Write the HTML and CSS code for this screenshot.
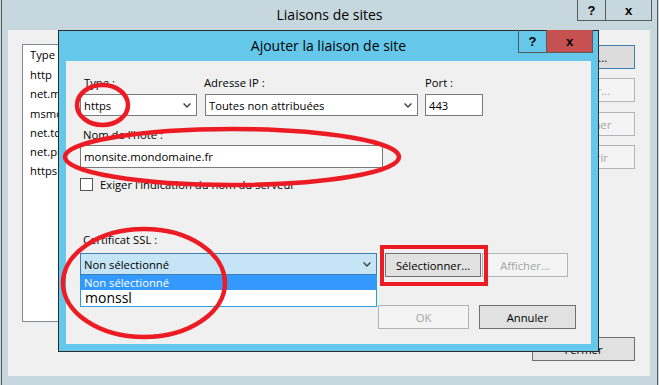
FILE: index.html
```html
<!DOCTYPE html>
<html lang="fr">
<head>
    <meta charset="UTF-8">
    <meta name="viewport" content="width=device-width, initial-scale=1.0">
    <title>Liaisons de sites</title>
    <link rel="stylesheet" href="styles.css">
</head>
<body>

    <!-- Fenêtre principale -->
    <div class="window outer">
        <div class="caption">
            <span class="caption-title">Liaisons de sites</span>
            <div class="caption-buttons outer-buttons">
                <span class="cap-btn help">?</span>
                <span class="cap-btn close">x</span>
            </div>
        </div>
        <div class="client">
            <div class="bindings">
                <div class="list">
                    <div class="list-head">Type</div>
                    <div class="list-row">http</div>
                    <div class="list-row">net.msmq</div>
                    <div class="list-row">msmq.formatname</div>
                    <div class="list-row">net.tcp</div>
                    <div class="list-row">net.pipe</div>
                    <div class="list-row">https</div>
                </div>
                <div class="side-buttons">
                    <button class="btn focused">Ajouter...</button>
                    <button class="btn" disabled>Modifier...</button>
                    <button class="btn" disabled>Supprimer</button>
                    <button class="btn" disabled>Parcourir</button>
                </div>
            </div>
            <div class="footer">
                <button class="btn fermer">Fermer</button>
            </div>
        </div>
    </div>

    <!-- Boîte de dialogue -->
    <div class="window dialog">
        <div class="caption">
            <span class="caption-title">Ajouter la liaison de site</span>
            <div class="caption-buttons dialog-buttons">
                <span class="cap-btn help">?</span>
                <span class="cap-btn close">x</span>
            </div>
        </div>
        <div class="client dialog-client">
            <div class="field-row">
                <div class="field type-field">
                    <label class="label first">Type :</label>
                    <div class="combo">
                        <span>https</span>
                        <svg class="chevron" width="8" height="5" viewBox="0 0 8 5"><polyline points="0.6,0.6 4,4 7.4,0.6"/></svg>
                    </div>
                </div>
                <div class="field ip-field">
                    <label class="label ip-label">Adresse IP :</label>
                    <div class="combo">
                        <span>Toutes non attribuées</span>
                        <svg class="chevron" width="8" height="5" viewBox="0 0 8 5"><polyline points="0.6,0.6 4,4 7.4,0.6"/></svg>
                    </div>
                </div>
                <div class="field port-field">
                    <label class="label">Port :</label>
                    <div class="textbox port-box">443</div>
                </div>
            </div>

            <div class="host-field">
                <label class="label first">Nom de l'hôte :</label>
                <div class="textbox host-box">monsite.mondomaine.fr</div>
            </div>

            <div class="check-row">
                <span class="checkbox"></span>
                <span>Exiger l'indication du nom du serveur</span>
            </div>

            <label class="label first ssl-label">Certificat SSL :</label>
            <div class="ssl-row">
                <div class="combo ssl-combo">
                    <span>Non sélectionné</span>
                    <svg class="chevron" width="8" height="5" viewBox="0 0 8 5"><polyline points="0.6,0.6 4,4 7.4,0.6"/></svg>
                </div>
                <button class="btn select-btn">Sélectionner...</button>
                <button class="btn show-btn" disabled>Afficher...</button>
            </div>

            <div class="dropdown">
                <div class="dropdown-item selected">Non sélectionné</div>
                <div class="dropdown-item big">monssl</div>
            </div>

            <div class="dialog-footer">
                <button class="btn ok-btn" disabled>OK</button>
                <button class="btn cancel-btn">Annuler</button>
            </div>
        </div>
    </div>

    <!-- Annotations rouges -->
    <svg class="marks" width="659" height="385" viewBox="0 0 659 385">
        <ellipse cx="102.5" cy="105" rx="25.5" ry="20"/>
        <ellipse cx="232" cy="157" rx="167" ry="28"/>
        <ellipse cx="144" cy="283" rx="81" ry="54"/>
        <rect x="382" y="247" width="104" height="37"/>
    </svg>

</body>
</html>
```

FILE: styles.css
```css
body {
    margin: 0;
    font-family: "Open Sans", "Noto Sans", sans-serif;
    font-size: 11.25px;
    color: #000;
    background-color: #c6d7dd;
    overflow: hidden;
}

button {
    font-family: inherit;
    font-size: inherit;
    padding: 0;
}

.window {
    position: absolute;
    box-sizing: border-box;
}

.caption {
    position: relative;
    height: 30px;
    line-height: 30px;
    text-align: center;
    font-size: 14px;
}

.caption-buttons {
    position: absolute;
    top: 0;
    display: flex;
    border: 1px solid #5a5a5a;
    border-top: none;
    line-height: normal;
}

.cap-btn {
    display: flex;
    align-items: center;
    justify-content: center;
    font-family: "Liberation Sans", sans-serif;
    font-weight: bold;
    font-size: 13px;
}

.cap-btn.help {
    width: 27px;
    border-right: 1px solid #5a5a5a;
}

.cap-btn.close {
    width: 45px;
}

/* fenêtre principale */
.outer {
    left: 1px;
    top: 0;
    width: 657px;
    height: 395px;
    background-color: #c6d7dd;
    border-left: 1px solid #5b5b5b;
    border-right: 1px solid #5b5b5b;
}

.outer-buttons {
    right: 5px;
    height: 20px;
}

.outer .client {
    box-sizing: border-box;
    height: 346px;
    margin: 0 7px 0 6px;
    padding: 14px 15px 0 14px;
    background-color: #f0f0f0;
}

.bindings {
    display: flex;
    gap: 13px;
}

.list {
    flex: 1;
    box-sizing: border-box;
    height: 278px;
    background-color: #fff;
    border: 1px solid #828790;
}

.list-head {
    height: 20px;
    line-height: 20px;
    padding-left: 7px;
}

.list-row {
    line-height: 19.3px;
    padding-left: 7px;
}

.side-buttons {
    display: flex;
    flex-direction: column;
    width: 103px;
    padding-top: 1px;
}

.side-buttons .btn {
    margin-bottom: 9px;
}

.side-buttons .btn:nth-child(2) {
    margin-bottom: 10px;
}

.footer {
    display: flex;
    justify-content: flex-end;
    margin-top: 15px;
}

.btn {
    box-sizing: border-box;
    height: 24px;
    background-color: #e1e1e1;
    border: 1px solid #707070;
    color: #000;
    text-align: center;
}

.btn:disabled {
    background-color: #f4f4f4;
    border-color: #b2b5b7;
    color: #a3a3a3;
}

.btn.focused {
    border-color: #3c7fb1;
    background-color: #dcdcdc;
}

.fermer {
    width: 103px;
}

/* boîte de dialogue */
.dialog {
    left: 58px;
    top: 30px;
    width: 541px;
    height: 322px;
    padding: 0 7px;
    background-color: #65c8ea;
    border: 1px solid #2b2b2b;
}

.dialog-buttons {
    right: -2px;
    top: -1px;
    height: 22px;
}

.dialog-buttons .close {
    background-color: #c75050;
}

.dialog-client {
    position: relative;
    box-sizing: border-box;
    height: 283px;
    padding: 14px 0 0 14px;
    background-color: #f0f0f0;
}

.label {
    display: block;
    line-height: 16px;
}

.label.first {
    padding-left: 3px;
}

.field-row {
    display: flex;
}

.field .label {
    margin-bottom: 3px;
}

.type-field {
    width: 117px;
}

.type-field .label {
    padding-left: 4px;
}

.ip-field {
    width: 213px;
    margin-left: 8px;
}

.ip-label {
    margin-left: -1px;
}

.port-field {
    width: 58px;
    margin-left: 7px;
}

.combo,
.textbox {
    box-sizing: border-box;
    height: 22px;
    display: flex;
    align-items: center;
    justify-content: space-between;
    padding: 0 5px 0 3px;
    background-color: #fff;
    border: 1px solid #7a7a7a;
}

.chevron polyline {
    fill: none;
    stroke: #404040;
    stroke-width: 1.4;
}

.host-field {
    margin-top: 11px;
}

.host-field .label {
    margin-bottom: 2px;
}

.host-box {
    width: 303px;
    height: 23px;
    font-size: 11.4px;
}

.check-row {
    display: flex;
    align-items: center;
    gap: 7px;
    height: 13px;
    margin-top: 10px;
}

.checkbox {
    box-sizing: border-box;
    width: 13px;
    height: 13px;
    background-color: #fff;
    border: 1px solid #555;
}

.ssl-label {
    margin-top: 41px;
    margin-bottom: 5px;
}

.ssl-row {
    display: flex;
    align-items: flex-start;
}

.ssl-combo {
    width: 297px;
    background-color: #c5e4f5;
    border-color: #3c7fb1;
}

.select-btn {
    width: 96px;
    margin-left: 8px;
}

.show-btn {
    width: 86px;
    margin-left: 1px;
}

.dropdown {
    position: absolute;
    left: 14px;
    top: 214px;
    box-sizing: border-box;
    width: 297px;
    height: 32px;
    background-color: #fff;
    border: 1px solid #26a0da;
    border-top: none;
}

.dropdown-item {
    height: 15px;
    line-height: 15px;
    padding-left: 3px;
}

.dropdown-item.selected {
    background-color: #3399ff;
    color: #fff;
}

.dropdown-item.big {
    font-size: 14px;
    line-height: 16px;
    height: 16px;
    padding-left: 4px;
}

.dialog-footer {
    display: flex;
    justify-content: flex-end;
    gap: 10px;
    margin-top: 28px;
    padding-right: 15px;
}

.ok-btn {
    width: 91px;
}

.cancel-btn {
    width: 97px;
}

/* annotations */
.marks {
    position: absolute;
    left: 0;
    top: 0;
    pointer-events: none;
}

.marks ellipse,
.marks rect {
    fill: none;
    stroke: #ed1c24;
    stroke-width: 4.5;
}

.marks rect {
    stroke-width: 4;
}
```
